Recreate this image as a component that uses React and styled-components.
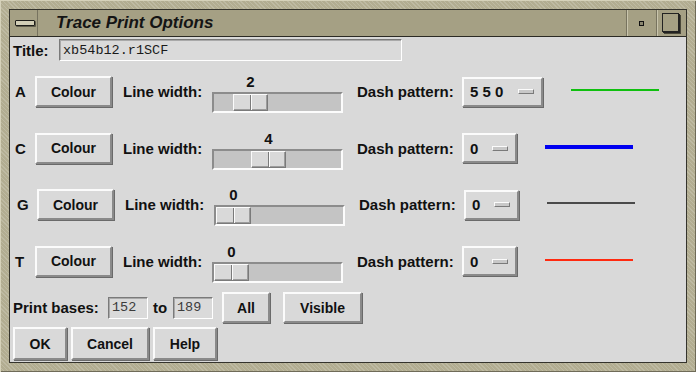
import React from 'react';
import styled, { createGlobalStyle } from 'styled-components';

const GlobalStyle = createGlobalStyle`
  body {
    margin: 0;
    background: #b3ae92;
  }
`;

const Frame = styled.div`
  width: 696px;
  height: 372px;
  box-sizing: border-box;
  padding: 9px;
  background-color: #b2ad91;
  background-image: repeating-linear-gradient(45deg, rgba(255, 255, 255, 0.16) 0 1px, transparent 1px 3px);
  box-shadow: inset 1px 1px 0 #d6d2ba, inset -1px -1px 0 #6f6b58;
  font-family: "Liberation Sans", Arial, sans-serif;
  color: #111;
`;

const Window = styled.div`
  height: 100%;
  box-sizing: border-box;
  border: 1px solid #34332c;
  display: flex;
  flex-direction: column;
`;

const TitleBar = styled.div`
  height: 26px;
  flex: none;
  display: flex;
  background: #a5a084;
  border-bottom: 1px solid #2b2a24;
`;

const TitleCell = styled.div`
  width: ${p => p.w}px;
  flex: none;
  display: flex;
  align-items: center;
  justify-content: center;
  border-left: ${p => (p.sep ? '1px solid #77735f' : 'none')};
  border-right: ${p => (p.sepRight ? '1px solid #77735f' : 'none')};
  box-shadow: ${p => (p.sep ? 'inset 1px 0 0 #c9c5ad' : 'none')};
`;

const MenuBar = styled.div`
  width: 18px;
  height: 4px;
  margin-left: 3px;
  background: #d2ceb6;
  border: 1px solid #1e1e1a;
  border-radius: 1px;
  box-shadow: 1px 1px 0 #5f5c4b;
`;

const MinDot = styled.div`
  width: 3px;
  height: 3px;
  background: #8a866f;
  border: 1px solid #111;
`;

const MaxBox = styled.div`
  width: 15px;
  height: 17px;
  border: 1px solid #222;
  box-shadow: 1px 1px 0 #222, 2px 2px 0 #4a4839;
  margin-right: 2px;
  margin-bottom: 1px;
`;

const WindowTitle = styled.div`
  flex: 1;
  display: flex;
  align-items: center;
  padding-left: 18px;
  font-size: 17px;
  font-weight: bold;
  font-style: italic;
  color: #141414;
`;

const Content = styled.div`
  flex: 1;
  background: #d9d9d9;
  display: flex;
  flex-direction: column;
`;

const Row = styled.div`
  height: ${p => p.h}px;
  flex: none;
  display: flex;
  align-items: center;
  padding-left: ${p => p.pad}px;
`;

const Label = styled.div`
  width: ${p => p.w}px;
  flex: none;
  font-size: 15px;
  font-weight: bold;
  white-space: nowrap;
  margin-left: ${p => p.ml || 0}px;
`;

const Field = styled.div`
  width: ${p => p.w}px;
  height: 22px;
  box-sizing: border-box;
  flex: none;
  display: flex;
  align-items: center;
  padding-left: 3px;
  margin-left: ${p => p.ml || 0}px;
  border: 1px solid;
  border-color: #7a7a7a #ffffff #ffffff #7a7a7a;
  box-shadow: inset 1px 1px 0 #a9a9a9;
  background: #dadada;
  font-family: "Liberation Mono", "Courier New", monospace;
  font-size: 13.5px;
  color: ${p => (p.dim ? '#3c3c3c' : '#1a1a1a')};
`;

const Button = styled.div`
  width: ${p => p.w}px;
  height: ${p => p.h || 31}px;
  box-sizing: border-box;
  flex: none;
  display: flex;
  align-items: center;
  justify-content: center;
  margin-left: ${p => p.ml || 0}px;
  border: 2px solid;
  border-color: #fbfbfb #8a8a8a #8a8a8a #fbfbfb;
  box-shadow: 1px 1px 0 #6a6a6a;
  background: #d9d9d9;
  font-size: 14px;
  font-weight: bold;
`;

const OptionButton = styled(Button)`
  justify-content: space-between;
  padding: 0 7px 0 6px;
  font-size: 15px;
  height: 30px;
`;

const Indicator = styled.div`
  width: 14px;
  height: 3px;
  border: 1px solid;
  border-color: #fbfbfb #7a7a7a #7a7a7a #fbfbfb;
  background: #c8c8c8;
`;

const SliderBlock = styled.div`
  width: 131px;
  flex: none;
  display: flex;
  flex-direction: column;
  margin-top: 3px;
  margin-left: ${p => p.ml}px;
`;

const SliderValue = styled.div`
  height: 17px;
  width: 35px;
  text-align: center;
  font-size: 15px;
  font-weight: bold;
  line-height: 17px;
`;

const Trough = styled.div`
  height: 21px;
  box-sizing: border-box;
  margin-top: 2px;
  display: flex;
  border: 2px solid;
  border-color: #8c8c8c #fcfcfc #fcfcfc #8c8c8c;
  background: #c4c4c4;
`;

const Thumb = styled.div`
  width: 35px;
  height: 17px;
  box-sizing: border-box;
  display: flex;
  border: 1px solid;
  border-color: #fbfbfb #7a7a7a #7a7a7a #fbfbfb;
  box-shadow: inset -1px -1px 0 #9c9c9c;
  background: #d9d9d9;
`;

const ThumbHalf = styled.div`
  flex: 1;
  border-right: ${p => (p.first ? '1px solid #7a7a7a' : 'none')};
  border-left: ${p => (p.first ? 'none' : '1px solid #fbfbfb')};
`;

const Sample = styled.div`
  width: 88px;
  height: ${p => p.t}px;
  flex: none;
  background: ${p => p.c};
  margin-left: 28px;
  margin-bottom: 3px;
`;

const channels = [
  { base: 'A', width: 2, dash: '5 5 0', dashW: 81, colour: '#10c010', t: 2, h: 57, pad: 5 },
  { base: 'C', width: 4, dash: '0', dashW: 55, colour: '#0000f0', t: 4, h: 56, pad: 5 },
  { base: 'G', width: 0, dash: '0', dashW: 55, colour: '#4a4a4a', t: 2, h: 57, pad: 7 },
  { base: 'T', width: 0, dash: '0', dashW: 55, colour: '#ff2a10', t: 2, h: 56, pad: 5 },
];

function Slider({ value }) {
  const offset = Math.round(value * 9.3);
  return (
    <SliderBlock ml={11}>
      <SliderValue style={{ marginLeft: offset + 2 }}>{value}</SliderValue>
      <Trough>
        <Thumb style={{ marginLeft: offset }}>
          <ThumbHalf first />
          <ThumbHalf />
        </Thumb>
      </Trough>
    </SliderBlock>
  );
}

function ChannelRow({ c }) {
  return (
    <Row h={c.h} pad={c.pad}>
      <Label w={20}>{c.base}</Label>
      <Button w={77}>Colour</Button>
      <Label w={78} ml={11}>Line width:</Label>
      <Slider value={c.width} />
      <Label w={105} ml={14}>Dash pattern:</Label>
      <OptionButton w={c.dashW}>
        <span>{c.dash}</span>
        <Indicator />
      </OptionButton>
      <Sample c={c.colour} t={c.t} />
    </Row>
  );
}

export default function App() {
  return (
    <>
      <GlobalStyle />
      <Frame>
        <Window>
          <TitleBar>
            <TitleCell w={27} sepRight>
              <MenuBar />
            </TitleCell>
            <WindowTitle>Trace Print Options</WindowTitle>
            <TitleCell w={29} sep>
              <MinDot />
            </TitleCell>
            <TitleCell w={29} sep>
              <MaxBox />
            </TitleCell>
          </TitleBar>
          <Content>
            <Row h={26} pad={3}>
              <Label w={46}>Title:</Label>
              <Field w={343}>xb54b12.r1SCF</Field>
            </Row>
            {channels.map(c => (
              <ChannelRow key={c.base} c={c} />
            ))}
            <Row h={37} pad={3}>
              <Label w={95}>Print bases:</Label>
              <Field w={40} dim>152</Field>
              <Label w={15} ml={5}>to</Label>
              <Field w={40} ml={5} dim>189</Field>
              <Button w={48} ml={9}>All</Button>
              <Button w={79} ml={13}>Visible</Button>
            </Row>
            <Row h={35} pad={3}>
              <Button w={54} h={33}>OK</Button>
              <Button w={78} h={33} ml={4}>Cancel</Button>
              <Button w={64} h={33} ml={4}>Help</Button>
            </Row>
          </Content>
        </Window>
      </Frame>
    </>
  );
}
